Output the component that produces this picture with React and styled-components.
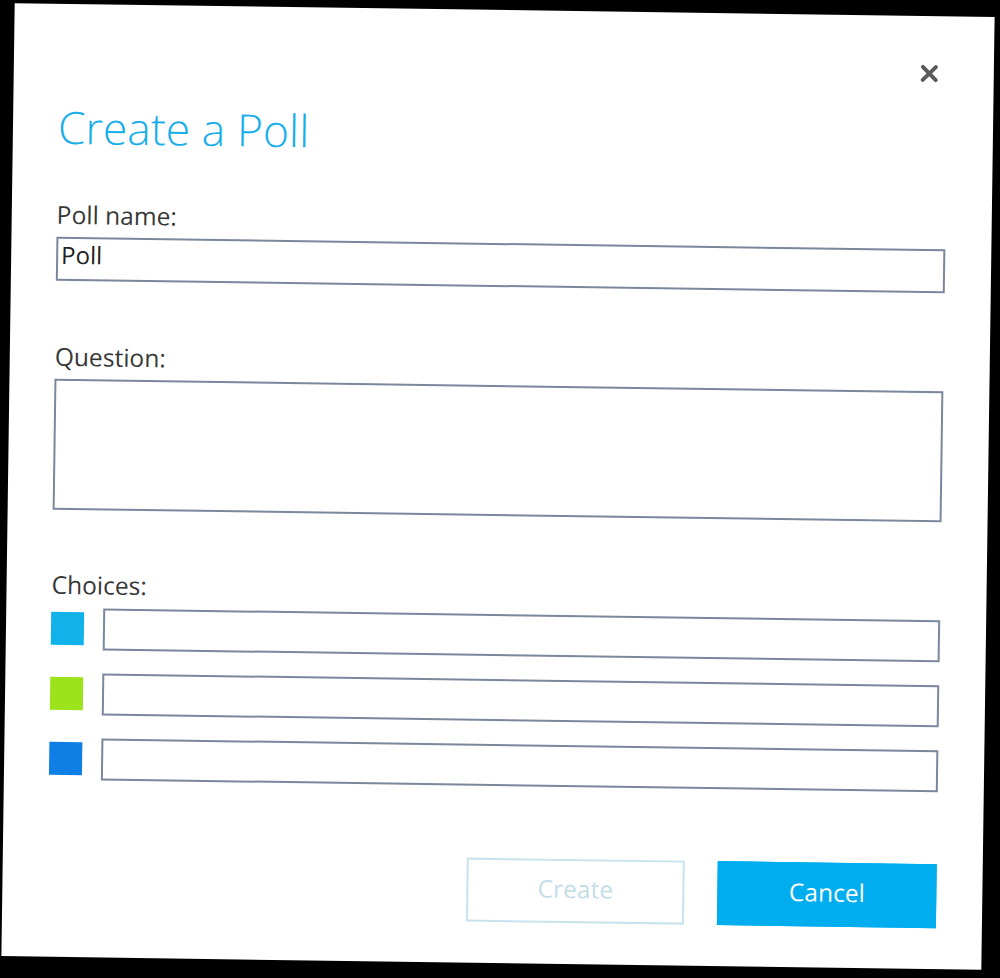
import React from "react";
import styled, { createGlobalStyle } from "styled-components";

const Global = createGlobalStyle`
  html, body {
    margin: 0;
    padding: 0;
    background: #000;
  }
  body {
    width: 1000px;
    height: 978px;
    overflow: hidden;
    font-family: "Open Sans", "Noto Sans", sans-serif;
  }
  * { box-sizing: border-box; }
`;

const Dialog = styled.div`
  width: 980px;
  height: 953px;
  margin: 9.5px 0 0 8px;
  padding: 0 46px 0 45px;
  background: #fff;
  display: flex;
  flex-direction: column;
  transform: rotate(0.8deg);
`;

const TopBar = styled.div`
  display: flex;
  justify-content: flex-end;
  padding-top: 48px;
`;

const CloseButton = styled.button`
  width: 19px;
  height: 19px;
  margin-right: 9.5px;
  padding: 0;
  border: none;
  background: transparent;
  display: flex;
  align-items: center;
  justify-content: center;
  cursor: pointer;
`;

const Title = styled.h1`
  margin: 30px 0 0;
  font-size: 44.5px;
  line-height: 52px;
  font-weight: 300;
  color: #17aeea;
`;

const Field = styled.div`
  display: flex;
  flex-direction: column;
  gap: 7px;
  margin-top: ${(p) => p.$mt}px;
`;

const Label = styled.label`
  font-size: 24.6px;
  line-height: 30px;
  color: #383838;
`;

const TextInput = styled.input`
  width: 100%;
  height: ${(p) => p.$h || 44}px;
  margin: 0;
  padding: 0 4px 8px 3px;
  border: 2px solid #7a879c;
  border-radius: 0;
  background: #fff;
  font-family: inherit;
  font-size: 24px;
  color: #222;
  outline: none;
`;

const TextArea = styled.textarea`
  width: 100%;
  height: 131px;
  margin: 0;
  padding: 4px;
  border: 2px solid #7a879c;
  border-radius: 0;
  resize: none;
  font-family: inherit;
  font-size: 24px;
  outline: none;
`;

const ChoiceList = styled.div`
  display: flex;
  flex-direction: column;
  gap: 23px;
  margin-top: 1px;
`;

const ChoiceRow = styled.div`
  display: flex;
  align-items: center;
  gap: 19px;
`;

const Swatch = styled.span`
  flex: none;
  width: 33px;
  height: 33px;
  background: ${(p) => p.$color};
`;

const Actions = styled.div`
  display: flex;
  justify-content: flex-end;
  gap: 33px;
  margin-top: 72px;
`;

const Button = styled.button`
  width: ${(p) => (p.$primary ? 219 : 218)}px;
  height: 64px;
  margin: 0;
  padding: 0 0 4px;
  border: 2px solid ${(p) => (p.$primary ? "#00adef" : "#c9e3ee")};
  border-radius: 0;
  background: ${(p) => (p.$primary ? "#00adef" : "#fff")};
  color: ${(p) => (p.$primary ? "#fff" : "#c4dee9")};
  font-family: inherit;
  font-size: 24.5px;
  cursor: ${(p) => (p.disabled ? "default" : "pointer")};
`;

const choices = ["#10b2e9", "#9ce31b", "#0f7fe5"];

export default function App() {
  return (
    <>
      <Global />
      <Dialog>
        <TopBar>
          <CloseButton aria-label="Close">
            <svg width="19" height="19" viewBox="0 0 19 19">
              <path
                d="M3 3 L16 16 M16 3 L3 16"
                stroke="#5b5b5b"
                strokeWidth="4"
                strokeLinecap="round"
              />
            </svg>
          </CloseButton>
        </TopBar>
        <Title>Create a Poll</Title>
        <Field $mt={46.7}>
          <Label>Poll name:</Label>
          <TextInput defaultValue="Poll" />
        </Field>
        <Field $mt={61}>
          <Label>Question:</Label>
          <TextArea />
        </Field>
        <Field $mt={60}>
          <Label>Choices:</Label>
          <ChoiceList>
            {choices.map((c) => (
              <ChoiceRow key={c}>
                <Swatch $color={c} />
                <TextInput $h={42} />
              </ChoiceRow>
            ))}
          </ChoiceList>
        </Field>
        <Actions>
          <Button disabled>Create</Button>
          <Button $primary>Cancel</Button>
        </Actions>
      </Dialog>
    </>
  );
}
